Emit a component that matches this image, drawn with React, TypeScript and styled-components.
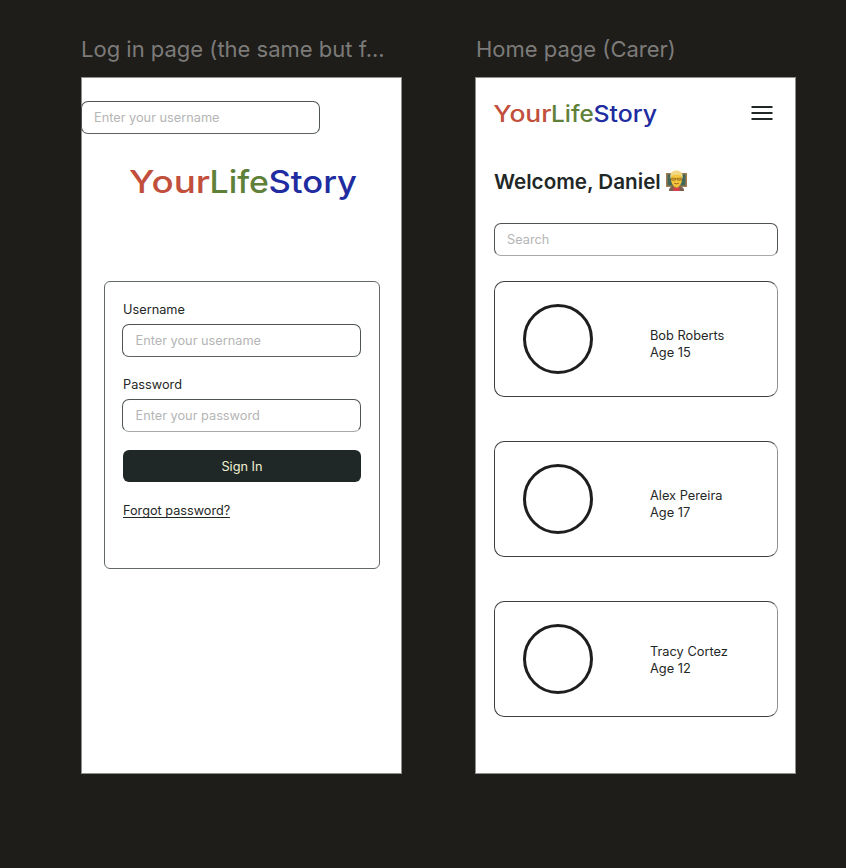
import React from "react";
import styled, { createGlobalStyle } from "styled-components";

const GlobalStyle = createGlobalStyle`
  *, *::before, *::after { box-sizing: border-box; }
  body { margin: 0; background: #1e1d1a; font-family: Inter, sans-serif; }
  h1, p { margin: 0; }
`;

const Canvas = styled.main`
  display: flex;
  gap: 73px;
  width: 846px;
  height: 868px;
  padding: 36px 0 0 81px;
  overflow: hidden;
  background: #1e1d1a;
`;

const Artboard = styled.section`
  width: 321px;
`;

const BoardTitle = styled.p<{ $indent?: number }>`
  height: 41px;
  padding-left: ${(p) => p.$indent ?? 0}px;
  color: #7c7b79;
  font-size: 22px;
  line-height: 27px;
  white-space: nowrap;
`;

const Phone = styled.div`
  display: flex;
  flex-direction: column;
  width: 321px;
  height: 697px;
  border: 1px solid #8e8e8c;
  background: #fff;
`;

const LoginPhone = styled(Phone)`
  padding-top: 23px;
`;

const HomePhone = styled(Phone)`
  padding: 23px 17px 0 18px;
`;

const TextInput = styled.input<{ $width: number; $soft?: boolean }>`
  display: block;
  flex: none;
  width: ${(p) => p.$width}px;
  height: 33px;
  padding: 0 12px 1px;
  border: 1px solid #4d5453;
  border-bottom-color: ${(p) => (p.$soft ? "#a5aaa9" : "#5d6362")};
  border-radius: 7px;
  outline: none;
  background: #fff;
  color: #1f2827;
  font: 400 12.75px/18px Inter, sans-serif;
  &::placeholder { color: #b5b5b5; opacity: 1; }
`;

const StrayInput = styled(TextInput)`
  margin-left: -1px;
`;

const LogoSvg = styled.svg`
  display: block;
  flex: none;
  overflow: visible;
  font-family: Inter, sans-serif;
  font-weight: 500;
`;

const LoginLogo = styled(LogoSvg)`
  margin: 30px 0 0 48px;
`;

const LoginCard = styled.form`
  display: flex;
  flex-direction: column;
  align-items: flex-start;
  width: 276px;
  height: 288px;
  margin: 77px 0 0 22px;
  padding: 19px 0 0 18px;
  border: 1px solid #626867;
  border-radius: 6px;
`;

const Field = styled.div`
  height: 75px;
`;

const Label = styled.div`
  height: 23px;
  color: #1f2827;
  font-size: 12.75px;
  line-height: 18px;
`;

const FieldInput = styled(TextInput)`
  margin-left: -1px;
  padding-left: 12.5px;
`;

const SignIn = styled.button`
  width: 238px;
  height: 32px;
  margin-top: -1px;
  padding: 2px 0 0;
  border: 0;
  border-radius: 6px;
  background: #1f2827;
  color: #f0f0d4;
  font: 400 12.75px/18px Inter, sans-serif;
`;

const Forgot = styled.a`
  height: 15px;
  margin-top: 21px;
  border-bottom: 1px solid #1f2827;
  color: #1f2827;
  font-size: 12.7px;
  line-height: 16px;
`;

const TopBar = styled.header`
  display: flex;
  justify-content: space-between;
  height: 67px;
`;

const MenuButton = styled.button`
  width: 22px;
  height: 16px;
  margin: 4px 5px 0 0;
  padding: 0;
  border: 0;
  background: none;
  svg { display: block; }
`;

const Greeting = styled.h1`
  display: flex;
  align-items: center;
  gap: 5px;
  height: 27px;
  margin-bottom: 28px;
  color: #1f2827;
  font-size: 20.65px;
  font-weight: 600;
  line-height: 27px;
  white-space: nowrap;
  svg { margin-top: -2px; }
`;

const CardList = styled.div`
  display: flex;
  flex-direction: column;
  gap: 44px;
  margin-top: 25px;
`;

const PersonCard = styled.article`
  display: flex;
  align-items: flex-start;
  width: 284px;
  height: 116px;
  padding: 22px 0 0 28px;
  border: 1px solid #3f3f3f;
  border-right-color: #8f8f8f;
  border-radius: 10px;
`;

const Avatar = styled.div`
  width: 70px;
  height: 70px;
  border: 3px solid #1e1e1e;
  border-radius: 50%;
`;

const Details = styled.p<{ $top: number }>`
  margin: ${(p) => p.$top}px 0 0 57px;
  color: #1f2827;
  font-size: 12.8px;
  line-height: 17px;
  white-space: nowrap;
`;

function Wordmark() {
  return (
    <>
      <text x="-1" y="24" fontSize="31.5" fill="#c14f3c" textLength="81" lengthAdjust="spacingAndGlyphs">Your</text>
      <text x="79.500" y="24" fontSize="31.5" fill="#5f8039" textLength="59.500" lengthAdjust="spacingAndGlyphs">Life</text>
      <text x="138.500" y="24" fontSize="31.5" fill="#202ca0" textLength="88.500" lengthAdjust="spacingAndGlyphs">Story</text>
    </>
  );
}

function TeacherIcon() {
  return (
    <svg width="21" height="21" viewBox="0 0 21 21" aria-label="Teacher">
      <path d="M0 3h21v14H0z" fill="#a47c50" />
      <path d="M1.5 4.3h18v11.2h-18z" fill="#41665a" />
      <path d="M3 20c.5-3 3-4 7.500-4s7 1 7.500 4v1H3z" fill="#79604f" />
      <path d="M7 17.500h7l-.5 3.500H7.500z" fill="#d3404c" />
      <path d="M8 15h5v2l-2.500 1L8 17z" fill="#d99b2b" />
      <ellipse cx="10.500" cy="9.500" rx="5.500" ry="7.500" fill="#f5c63c" />
      <path d="M4.500 9C3.500 3 6 .4 10.500.4S17.500 3 16.500 9L14.800 5.600C12 4.600 9 4.600 6.200 5.600z" fill="#f1d887" />
      <path d="M5.800 8.200h3.600v2H5.800zM11.600 8.200h3.600v2h-3.600zM9.400 8.800h2.200" fill="#e2aa2d" stroke="#886221" strokeWidth=".7" />
      <path d="M8.200 13.300q2.300 1.100 4.600 0" fill="none" stroke="#925825" strokeWidth=".9" />
    </svg>
  );
}

const people = [
  { name: "Bob Roberts", age: 15, top: 23 },
  { name: "Alex Pereira", age: 17, top: 23 },
  { name: "Tracy Cortez", age: 12, top: 19 },
];

export default function App() {
  return (
    <>
      <GlobalStyle />
      <Canvas>
        <Artboard>
          <BoardTitle>Log in page (the same but f...</BoardTitle>
          <LoginPhone>
            <StrayInput $width={239} placeholder="Enter your username" />
            <LoginLogo width="227" height="40" viewBox="0 -5 227 40">
              <Wordmark />
            </LoginLogo>
            <LoginCard>
              <Field>
                <Label>Username</Label>
                <FieldInput $width={239} placeholder="Enter your username" />
              </Field>
              <Field>
                <Label>Password</Label>
                <FieldInput $width={239} $soft placeholder="Enter your password" />
              </Field>
              <SignIn type="button">Sign In</SignIn>
              <Forgot>Forgot password?</Forgot>
            </LoginCard>
          </LoginPhone>
        </Artboard>
        <Artboard>
          <BoardTitle $indent={1}>Home page (Carer)</BoardTitle>
          <HomePhone>
            <TopBar>
              <LogoSvg width="163" height="28" viewBox="0 -5 227 39">
                <Wordmark />
              </LogoSvg>
              <MenuButton aria-label="Menu">
                <svg width="22" height="16" viewBox="0 0 22 16">
                  <path d="M.5 2h21M.5 8h21M.5 14h21" stroke="#1f2827" strokeWidth="2" />
                </svg>
              </MenuButton>
            </TopBar>
            <Greeting>
              Welcome, Daniel <TeacherIcon />
            </Greeting>
            <TextInput $width={284} $soft placeholder="Search" />
            <CardList>
              {people.map((p) => (
                <PersonCard key={p.name}>
                  <Avatar />
                  <Details $top={p.top}>
                    {p.name}
                    <br />
                    Age {p.age}
                  </Details>
                </PersonCard>
              ))}
            </CardList>
          </HomePhone>
        </Artboard>
      </Canvas>
    </>
  );
}
